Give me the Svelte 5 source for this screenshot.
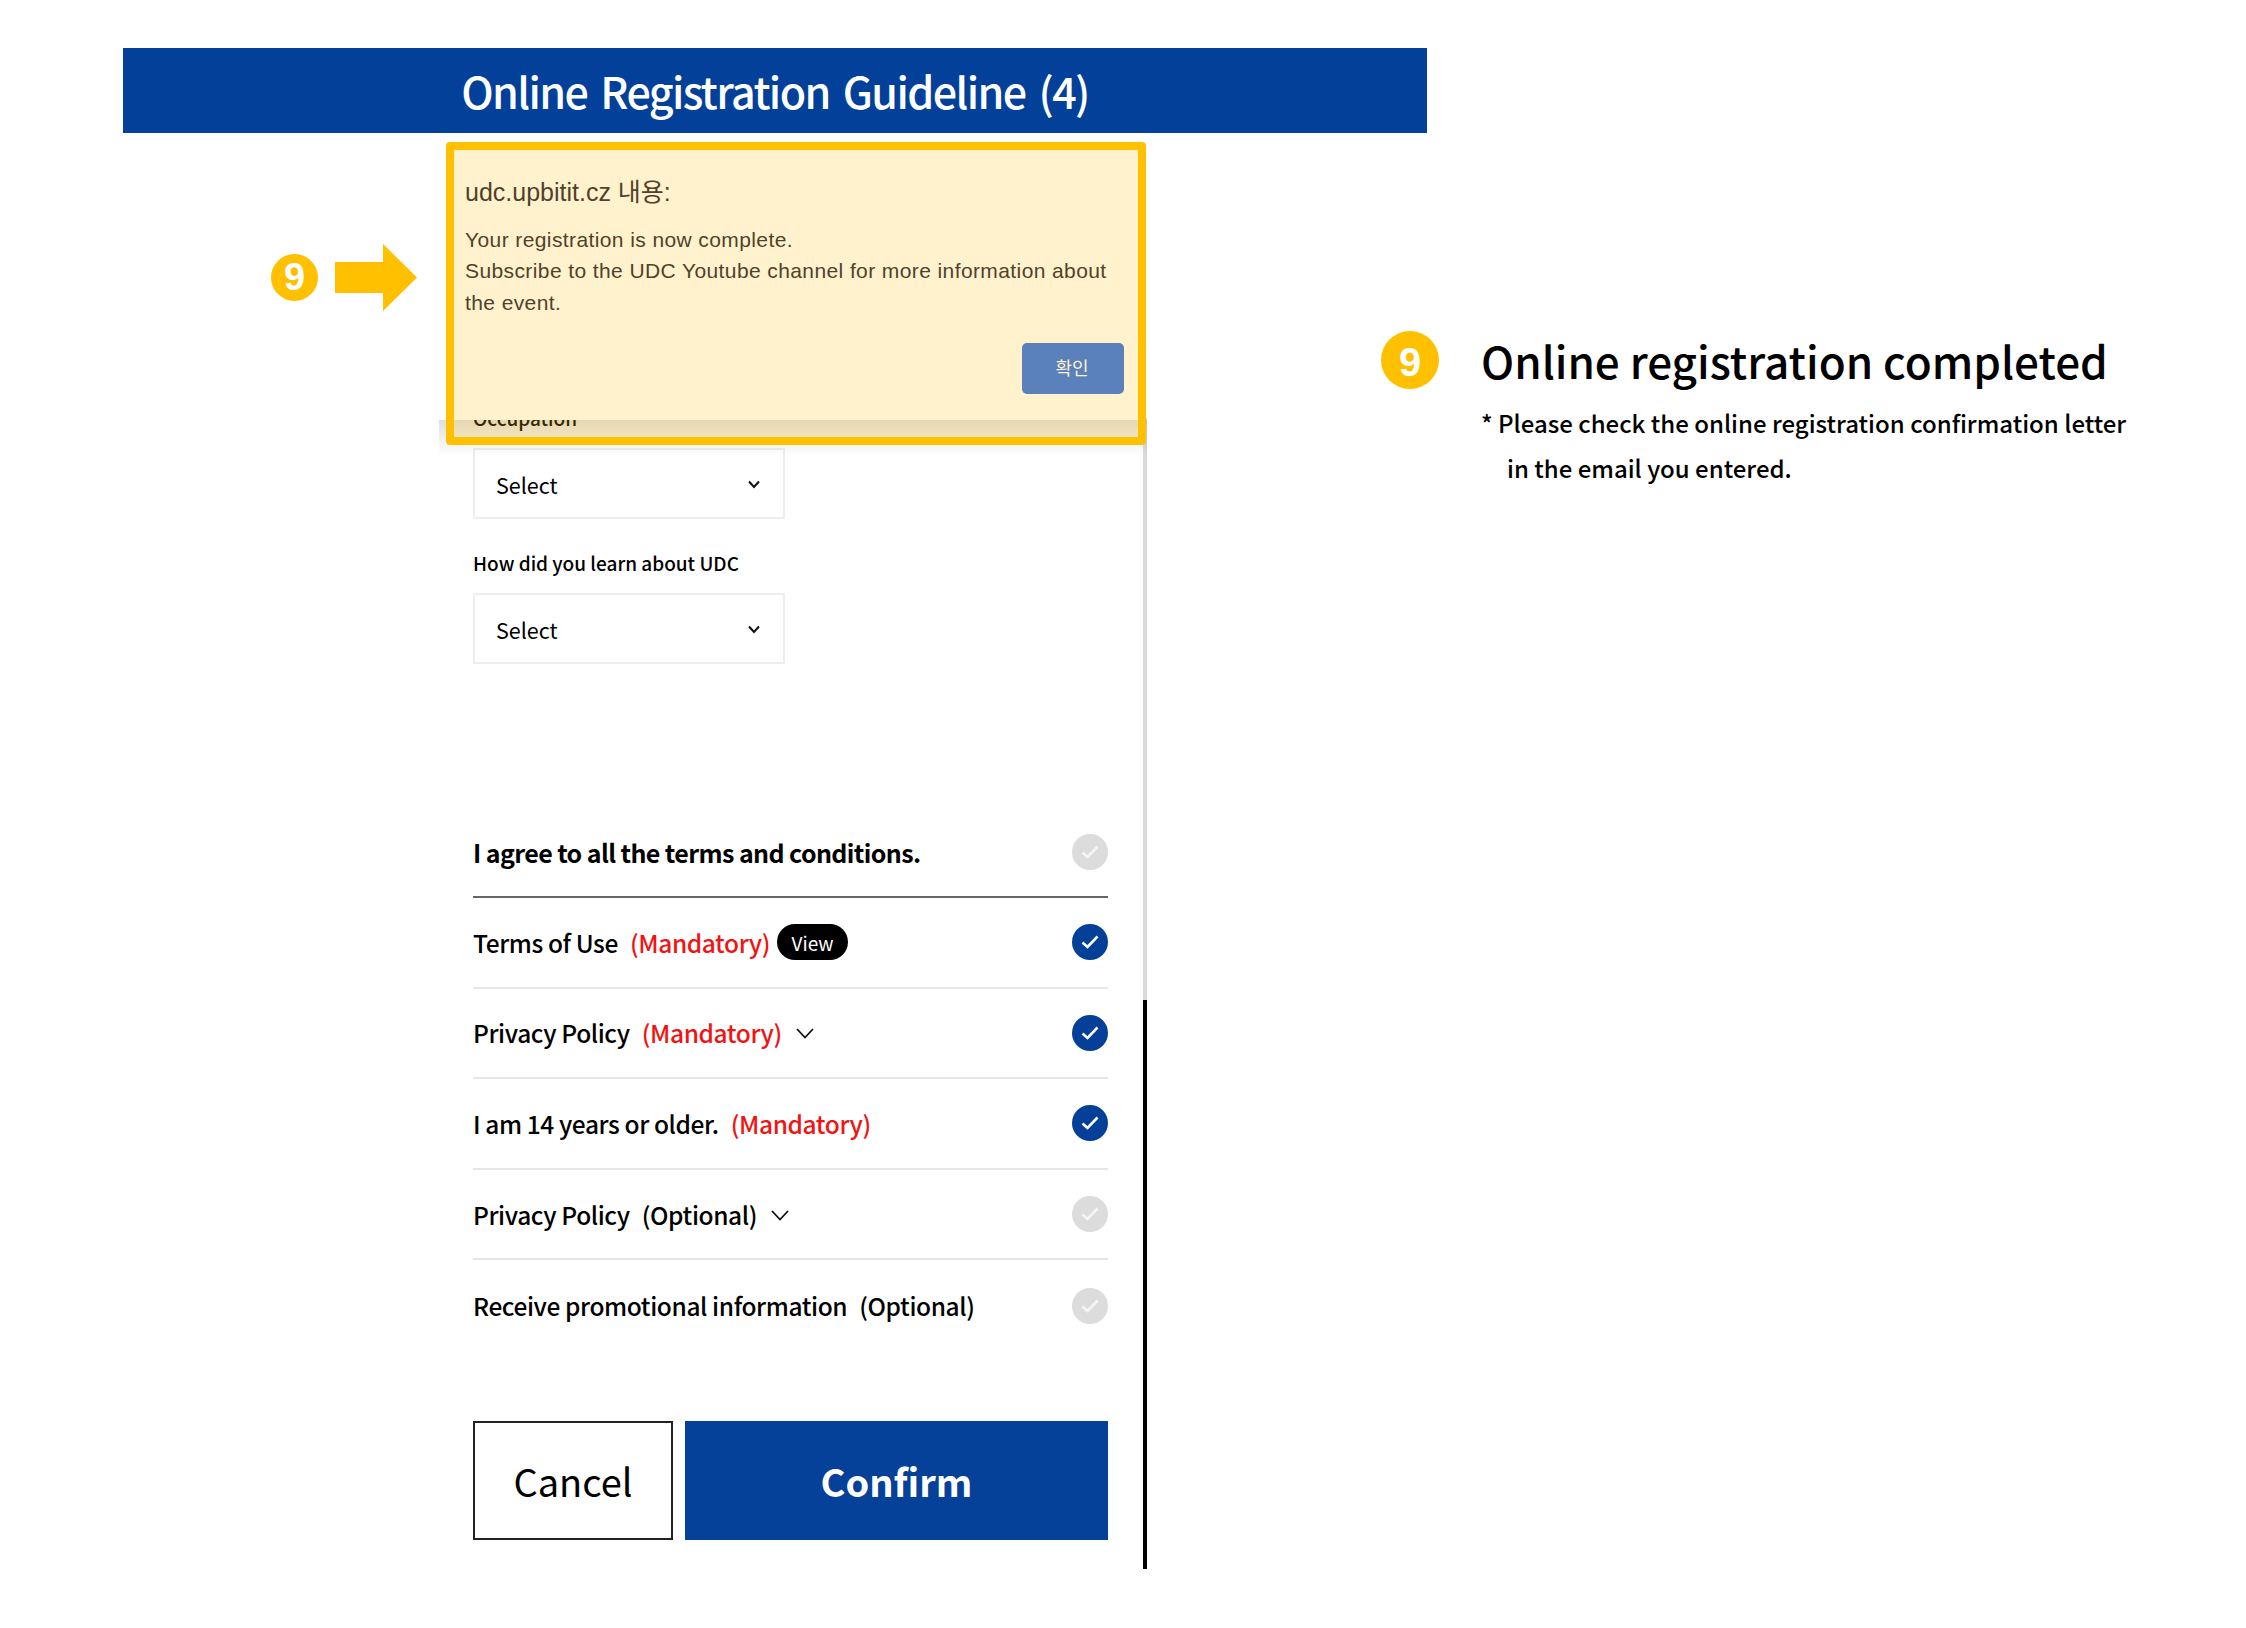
<script>
  const rows = [
    { text: 'Terms of Use', tag: '(Mandatory)', red: true, view: true, on: true },
    { text: 'Privacy Policy', tag: '(Mandatory)', red: true, chevron: true, on: true },
    { text: 'I am 14 years or older.', tag: '(Mandatory)', red: true, on: true },
    { text: 'Privacy Policy', tag: '(Optional)', chevron: true },
    { text: 'Receive promotional information', tag: '(Optional)' }
  ];
</script>

{#snippet check(on)}
  <span class="check" class:on>
    <svg width="18" height="14" viewBox="0 0 18 14" fill="none"><path d="M1.5 7.5 6.5 12 16.5 1.5" stroke="currentColor" stroke-width="2.6"/></svg>
  </span>
{/snippet}

{#snippet select()}
  <div class="select">
    <span>Select</span>
    <svg width="12" height="9" viewBox="0 0 12 9" fill="none"><path d="M1 1.5 6 7 11 1.5" stroke="#111" stroke-width="2"/></svg>
  </div>
{/snippet}

<div class="page">
  <h1 class="banner">Online Registration Guideline (4)</h1>
  <div class="stage">
    <div class="marker">
      <span class="badge small">9</span>
      <svg width="82" height="67" viewBox="0 0 82 67"><path d="M0 18H48V0L82 33.5 48 67V49H0Z" fill="#FFC000"/></svg>
    </div>

    <section class="panel">
      <div class="content">
        <div class="label">Occupation</div>
        {@render select()}
        <div class="label second">How did you learn about UDC</div>
        {@render select()}

        <div class="agree">
          <strong>I agree to all the terms and conditions.</strong>
          {@render check(false)}
        </div>
        <div class="rows">
          {#each rows as r}
            <div class="row">
              <span class="row-text">{r.text}</span>
              <span class="tag" class:red={r.red}>{r.tag}</span>
              {#if r.view}<span class="view">View</span>{/if}
              {#if r.chevron}
                <svg class="down" width="18" height="11" viewBox="0 0 18 11" fill="none"><path d="M1 1 9 9.5 17 1" stroke="#111" stroke-width="1.8"/></svg>
              {/if}
              {@render check(r.on)}
            </div>
          {/each}
        </div>

        <div class="actions">
          <button class="cancel">Cancel</button>
          <button class="confirm">Confirm</button>
        </div>
      </div>
      <div class="track"></div>

      <div class="dialog">
        <div class="d-title">udc.upbitit.cz 내용:</div>
        <div class="d-msg">Your registration is now complete.<br />Subscribe to the UDC Youtube channel for more information about the event.</div>
        <button class="d-btn">확인</button>
      </div>
      <div class="frame"></div>
    </section>

    <aside class="note">
      <span class="badge large">9</span>
      <div>
        <h2>Online registration completed</h2>
        <p>* Please check the online registration confirmation letter</p>
        <p class="indent">in the email you entered.</p>
      </div>
    </aside>
  </div>
</div>

<style>
  :global(body) { margin: 0; background: #fff; }
  .page {
    width: 2246px; height: 1628px; padding-top: 48px; box-sizing: border-box; overflow: hidden;
    font-family: "Noto Sans CJK KR", "Noto Sans", sans-serif; color: #000;
  }
  .banner {
    margin: 0 0 0 123px; width: 1304px; height: 85px; background: #02409a; color: #fff;
    display: flex; align-items: center; justify-content: center;
    font-size: 43px; font-weight: 500; line-height: 1; letter-spacing: -1.6px; word-spacing: 5px;
  }
  .stage { display: flex; align-items: flex-start; padding-left: 271px; }
  .marker { width: 146px; margin-top: 111px; display: flex; align-items: center; gap: 17px; flex: none; }
  .badge {
    flex: none; border-radius: 50%; background: #ffc000; color: #fff;
    display: flex; align-items: center; justify-content: center;
    font-family: "Liberation Sans", sans-serif; font-weight: 700;
  }
  .small { width: 47px; height: 47px; font-size: 38px; }
  .large { width: 58px; height: 58px; box-sizing: border-box; padding-top: 4px; font-size: 40px; }

  .panel { position: relative; flex: none; width: 701px; margin: 9px 0 0 29px; display: flex; }
  .content { width: 697px; box-sizing: border-box; padding: 261px 35px 29px 27px; }
  .track {
    flex: none; width: 4px; margin-top: 276px;
    background: linear-gradient(#d9d9d9 0 582px, #000 582px);
  }
  .label { font-size: 19px; font-weight: 500; line-height: 30px; margin-bottom: 15px; }
  .label.second { margin-top: 28.5px; margin-bottom: 15.5px; }
  .select {
    width: 312px; height: 71px; box-sizing: border-box; border: 2px solid #eeeeee;
    display: flex; align-items: center; justify-content: space-between;
    padding: 2px 23px 0 21px; font-size: 21.5px;
  }
  .agree {
    margin-top: 143px; height: 91px; box-sizing: border-box; border-bottom: 2px solid #666;
    display: flex; align-items: center; justify-content: space-between;
  }
  .agree strong { font-size: 25px; font-weight: 700; letter-spacing: -0.6px; }
  .row {
    height: 90.6px; box-sizing: border-box; border-bottom: 2px solid #e6e6e6;
    display: flex; align-items: center; font-size: 24.5px; font-weight: 500; letter-spacing: -0.4px;
  }
  .row:last-child { border-bottom: 0; }
  .tag { margin-left: 12px; }
  .red { color: #f01414; }
  .view {
    margin-left: 7px; width: 71px; height: 36px; border-radius: 18px; background: #000; color: #fff;
    display: flex; align-items: center; justify-content: center; font-size: 19px; font-weight: 400; letter-spacing: 0;
  }
  .down { margin-left: 14px; margin-top: 2px; }
  .check {
    margin-left: auto; flex: none; width: 36px; height: 36px; border-radius: 50%;
    background: #dcdcdc; color: #f5f5f5;
    display: flex; align-items: center; justify-content: center;
  }
  .check.on { background: #043f98; color: #fff; }
  .actions { margin-top: 70.5px; display: flex; gap: 12px; }
  .actions button { height: 119px; font-family: inherit; padding: 0; border-radius: 0; }
  .cancel { width: 200px; background: #fff; border: 2px solid #222; color: #000; font-size: 38px; }
  .confirm { flex: 1; background: #054099; border: 0; color: #fff; font-size: 38px; font-weight: 700; }

  .dialog {
    position: absolute; left: -7px; top: 0; width: 708px; height: 278px; box-sizing: border-box;
    background: #fff; border-radius: 0 0 8px 8px; padding: 35px 23px 0 26px;
    display: flex; flex-direction: column;
    font-family: "Liberation Sans", "Noto Sans CJK KR", sans-serif; color: #242238;
  }
  .dialog::after {
    content: ""; position: absolute; left: 0; right: 0; top: 100%; height: 36px;
    background: linear-gradient(rgba(0, 0, 0, .13), rgba(0, 0, 0, 0));
  }
  .d-title { font-size: 25px; line-height: 30px; }
  .d-msg { margin-top: 16.5px; font-size: 21px; line-height: 31.5px; letter-spacing: 0.4px; }
  .d-btn {
    margin-top: 25px; align-self: flex-end; width: 102px; height: 51px; border: 0; border-radius: 5px;
    background: #3272eb; color: #fff; font-family: inherit; font-size: 18px; padding: 0 2px 3px 0;
  }
  .frame {
    position: absolute; left: 0; top: 0; width: 700px; height: 303px; box-sizing: border-box;
    border: 8px solid #ffc000; border-radius: 4px; background: rgba(255, 192, 0, .2);
  }

  .note { margin: 198px 0 0 234px; display: flex; gap: 42px; white-space: nowrap; flex: none; }
  .note h2 { margin: -3px 0 7.5px; font-size: 44px; font-weight: 500; line-height: 64px; }
  .note p { margin: 0; font-size: 24px; font-weight: 500; line-height: 45px; }
  .note .indent { padding-left: 26px; }
</style>
